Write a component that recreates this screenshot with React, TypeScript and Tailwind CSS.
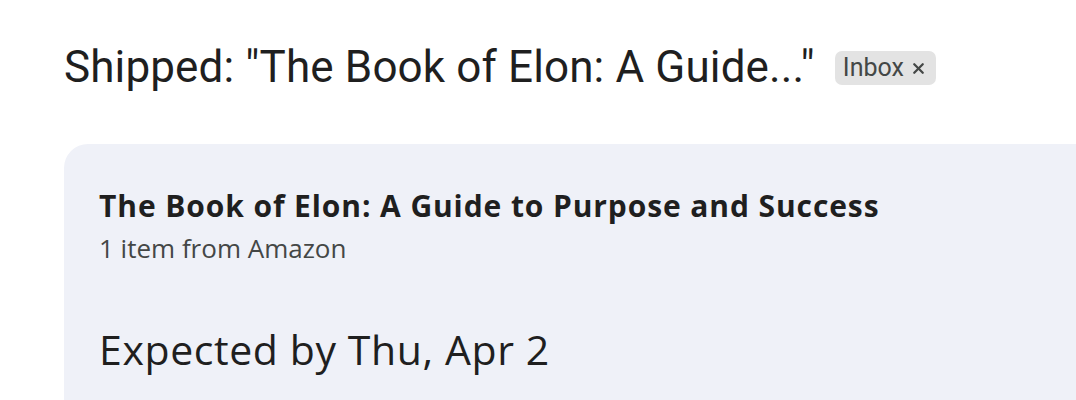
import { X } from "lucide-react";

export default function App() {
  return (
    <div
      className="h-[400px] w-[1076px] overflow-hidden bg-white pl-16"
      style={{ fontFamily: "Roboto, 'Liberation Sans', sans-serif" }}
    >
      <div className="flex items-center gap-[20px] pt-[41px]">
        <h1 className="text-[44px] leading-[52px] font-normal tracking-[0.13px] text-[#1f1f1f] whitespace-nowrap">
          Shipped: "The Book of Elon: A Guide..."
        </h1>
        <span className="mt-[2px] flex h-[34px] items-center gap-[6px] rounded-[7px] bg-[#e3e3e3] pl-[8px] pr-[9px] text-[25px] text-[#444746]">
          Inbox
          <X className="h-[17px] w-[17px]" strokeWidth={3.2} />
        </span>
      </div>

      <div
        className="mt-[51px] w-[1100px] rounded-[24px] bg-[#eff1f8] pl-[35px] pt-[42px] pb-[60px]"
        style={{ fontFamily: "'Open Sans', Roboto, sans-serif" }}
      >
        <div className="text-[30px] leading-[40px] font-bold tracking-[0.9px] text-[#1f1f1f] whitespace-nowrap">
          The Book of Elon: A Guide to Purpose and Success
        </div>
        <div className="mt-[2px] text-[26px] leading-[40px] text-[#444746]">1 item from Amazon</div>
        <div className="mt-[55px] text-[41px] leading-[52px] tracking-[0.6px] text-[#1f1f1f]">
          Expected by Thu, Apr 2
        </div>
      </div>
    </div>
  );
}
